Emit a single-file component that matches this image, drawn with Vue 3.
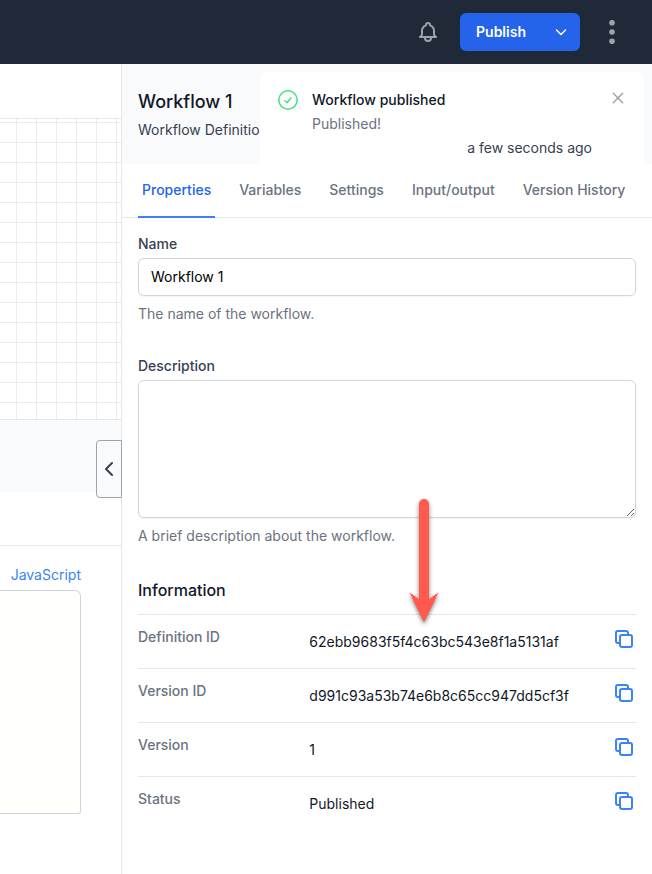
<script setup>
import { ref } from 'vue'

const name = ref('Workflow 1')
const description = ref('')
const activeTab = ref('Properties')
const tabs = ['Properties', 'Variables', 'Settings', 'Input/output', 'Version History']
const info = [
  { label: 'Definition ID', value: '62ebb9683f5f4c63bc543e8f1a5131af' },
  { label: 'Version ID', value: 'd991c93a53b74e6b8c65cc947dd5cf3f' },
  { label: 'Version', value: '1' },
  { label: 'Status', value: 'Published' },
]
</script>

<template>
  <div class="page">
    <header class="topbar">
      <button class="icon-btn" type="button" aria-label="Notifications">
        <svg width="24" height="24" viewBox="0 0 24 24" fill="none" stroke="currentColor" stroke-width="2" stroke-linecap="round" stroke-linejoin="round">
          <path d="M15 17h5l-1.405-1.405A2.032 2.032 0 0118 14.158V11a6.002 6.002 0 00-4-5.659V5a2 2 0 10-4 0v.341C7.67 6.165 6 8.388 6 11v3.159c0 .538-.214 1.055-.595 1.436L4 17h5m6 0v1a3 3 0 11-6 0v-1m6 0H9" />
        </svg>
      </button>
      <div class="publish">
        <button class="publish-main" type="button">Publish</button>
        <button class="publish-more" type="button" aria-label="Publish options">
          <svg width="20" height="20" viewBox="0 0 20 20" fill="none" stroke="currentColor" stroke-width="1.5" stroke-linecap="round" stroke-linejoin="round">
            <path d="M5.500 8l4.500 4.500L14.500 8" />
          </svg>
        </button>
      </div>
      <button class="icon-btn" type="button" aria-label="More">
        <svg width="24" height="24" viewBox="0 0 24 24" fill="currentColor">
          <circle cx="12" cy="2.700" r="2.800" />
          <circle cx="12" cy="12" r="2.800" />
          <circle cx="12" cy="21.300" r="2.800" />
        </svg>
      </button>
    </header>

    <main class="workspace">
      <section class="designer">
        <div class="toolbar"></div>
        <div class="canvas"></div>
        <div class="strip"></div>
        <div class="strip-gap"></div>
        <div class="editor">
          <a class="syntax" href="#">JavaScript</a>
          <div class="code"></div>
        </div>
        <button class="toggle" type="button" aria-label="Collapse panel">
          <svg width="24" height="24" viewBox="0 0 24 24" fill="none" stroke="currentColor" stroke-width="2" stroke-linecap="round" stroke-linejoin="round">
            <path d="M15 18l-6-6 6-6" />
          </svg>
        </button>
      </section>

      <aside class="panel">
        <div class="panel-head">
          <h2>Workflow 1</h2>
          <p>Workflow Definition</p>
        </div>

        <nav class="tabs">
          <button
            v-for="tab in tabs"
            :key="tab"
            type="button"
            class="tab"
            :class="{ active: tab === activeTab }"
            @click="activeTab = tab"
          >{{ tab }}</button>
        </nav>

        <form class="form" @submit.prevent>
          <div class="field">
            <label for="wf-name">Name</label>
            <input id="wf-name" v-model="name" type="text" />
            <p>The name of the workflow.</p>
          </div>
          <div class="field">
            <label for="wf-description">Description</label>
            <textarea id="wf-description" v-model="description"></textarea>
            <p>A brief description about the workflow.</p>
          </div>

          <section class="info">
            <h3>Information</h3>
            <dl>
              <div v-for="row in info" :key="row.label" class="row">
                <dt>{{ row.label }}</dt>
                <dd>
                  <span>{{ row.value }}</span>
                  <button class="copy" type="button" :aria-label="'Copy ' + row.label">
                    <svg width="24" height="24" viewBox="0 0 24 24" fill="none" stroke="currentColor" stroke-width="2" stroke-linecap="round" stroke-linejoin="round">
                      <path d="M8 16H6a2 2 0 01-2-2V6a2 2 0 012-2h8a2 2 0 012 2v2m-6 12h8a2 2 0 002-2v-8a2 2 0 00-2-2h-8a2 2 0 00-2 2v8a2 2 0 002 2z" />
                    </svg>
                  </button>
                </dd>
              </div>
            </dl>
          </section>
        </form>
      </aside>
    </main>

    <div class="toast" role="status">
      <svg class="toast-icon" width="24" height="24" viewBox="0 0 24 24" fill="none" stroke="currentColor" stroke-width="1.5" stroke-linecap="round" stroke-linejoin="round">
        <path d="M9 12.800l2 2 4-5" />
        <circle cx="12" cy="12" r="9.200" />
      </svg>
      <div class="toast-body">
        <strong>Workflow published</strong>
        <p>Published!</p>
        <time>a few seconds ago</time>
      </div>
      <button class="close" type="button" aria-label="Close">
        <svg width="20" height="20" viewBox="0 0 20 20" fill="none" stroke="currentColor" stroke-width="1.5" stroke-linecap="round">
          <path d="M5.300 5.300l9.400 9.400M14.700 5.300l-9.400 9.400" />
        </svg>
      </button>
    </div>

    <svg class="pointer" width="40" height="136" viewBox="0 0 40 136" aria-hidden="true">
      <path d="M15 9a5 5 0 0110 0v95l9.500-6.500L20 127.500 5.500 97.500l9.500 6.500z" fill="#ff5a4d" />
    </svg>
  </div>
</template>

<style>
body {
  background: #fff;
}
</style>

<style scoped>
.page {
  position: relative;
  display: flex;
  flex-direction: column;
  min-height: 100vh;
  font-family: Inter, "Liberation Sans", sans-serif;
  font-size: 14px;
  line-height: 20px;
  color: #111827;
}
.page * {
  box-sizing: border-box;
}
h2, h3, p, dl, dt, dd {
  margin: 0;
}
button {
  margin: 0;
  padding: 0;
  border: 0;
  background: none;
  font: inherit;
  color: inherit;
  cursor: pointer;
}
svg {
  display: block;
  flex: none;
}

.topbar {
  display: flex;
  align-items: center;
  justify-content: flex-end;
  gap: 20px;
  height: 64px;
  padding: 0 28px;
  background: #1f2937;
}
.icon-btn {
  color: #9ca3af;
}
.publish {
  display: flex;
  width: 120px;
  height: 38px;
  border-radius: 6px;
  background: #2563eb;
  color: #fff;
}
.publish-main {
  flex: 1;
  font-weight: 600;
}
.publish-more {
  display: grid;
  place-items: center;
  width: 38px;
}

.workspace {
  flex: 1;
  display: grid;
  grid-template-columns: 122px minmax(0, 1fr);
}
.designer {
  position: relative;
  border-right: 1px solid #e5e7eb;
}
.toolbar {
  height: 55px;
  border-bottom: 1px solid #e5e7eb;
}
.canvas {
  height: 301px;
  border-bottom: 1px solid #e5e7eb;
  background-image:
    linear-gradient(90deg, #ebebed 1px, transparent 1px),
    linear-gradient(#ebebed 1px, transparent 1px);
  background-size: 20px 20px;
  background-position: 16px 3px;
}
.strip {
  height: 72px;
  background: #f9fafc;
}
.strip-gap {
  height: 54px;
  border-bottom: 1px solid #e5e7eb;
}
.editor {
  padding: 19px 40px 60px 0;
  text-align: right;
}
.syntax {
  display: block;
  color: #3b82f6;
  text-decoration: none;
}
.code {
  height: 224px;
  margin-top: 5px;
  border: 1px solid #d1d5db;
  border-left: 0;
  border-radius: 0 6px 3px 0;
  background: #fffffc;
}
.toggle {
  position: absolute;
  top: 376px;
  right: -1px;
  display: grid;
  place-items: center;
  width: 26px;
  height: 58px;
  border: 1px solid #9ca3af;
  border-radius: 4px 0 0 4px;
  background: #f9fafc;
  color: #374151;
}

.panel-head {
  padding: 24px 16px;
  background: #f9fafc;
}
.panel-head h2 {
  font-size: 18px;
  font-weight: 500;
  line-height: 28px;
}
.panel-head p {
  margin-top: 4px;
  color: #374151;
}
.tabs {
  display: flex;
  gap: 20px;
  height: 54px;
  padding: 0 16px;
  border-bottom: 1px solid #e5e7eb;
}
.tab {
  height: 54px;
  padding: 0 4px;
  border-bottom: 2px solid transparent;
  font-weight: 500;
  color: #6b7280;
  white-space: nowrap;
}
.tab.active {
  border-color: #3b82f6;
  color: #2563eb;
}

.form {
  display: flex;
  flex-direction: column;
  gap: 32px;
  padding: 16px;
}
.field {
  display: flex;
  flex-direction: column;
}
.field label {
  margin-bottom: 4px;
  font-weight: 500;
  color: #374151;
}
.field input,
.field textarea {
  width: 100%;
  margin: 0;
  padding: 7px 12px 9px;
  border: 1px solid #d1d5db;
  border-radius: 6px;
  background: #fff;
  box-shadow: 0 1px 2px rgba(0, 0, 0, 0.05);
  font: inherit;
  color: #000;
}
.field input {
  height: 38px;
}
.field textarea {
  height: 138px;
  resize: vertical;
}
.field p {
  margin-top: 8px;
  color: #6b7280;
}

.info h3 {
  margin-bottom: 12px;
  font-size: 16px;
  font-weight: 500;
  line-height: 24px;
}
.row {
  display: grid;
  grid-template-columns: repeat(3, minmax(0, 1fr));
  gap: 16px;
  padding: 12px 0;
  border-top: 1px solid #e5e7eb;
}
.row dt {
  font-weight: 500;
  color: #6b7280;
}
.row dd {
  grid-column: span 2;
  display: flex;
  align-items: flex-start;
  justify-content: space-between;
  line-height: 29px;
}
.copy {
  color: #3b82f6;
}

.toast {
  position: absolute;
  top: 72px;
  right: 8px;
  display: flex;
  width: 384px;
  padding: 16px;
  border-radius: 8px;
  background: #fff;
}
.toast-icon {
  color: #4ade80;
}
.toast-body {
  flex: 1;
  display: flex;
  flex-direction: column;
  gap: 4px;
  margin: 0 16px 0 12px;
  padding-top: 2px;
}
.toast-body strong {
  font-weight: 500;
}
.toast-body p {
  color: #6b7280;
}
.toast-body time {
  text-align: right;
  color: #374151;
}
.close {
  align-self: flex-start;
  color: #9ca3af;
}

.pointer {
  position: absolute;
  top: 495px;
  right: 208px;
  filter: drop-shadow(0 2px 2px rgba(0, 0, 0, 0.5));
  pointer-events: none;
}
</style>
